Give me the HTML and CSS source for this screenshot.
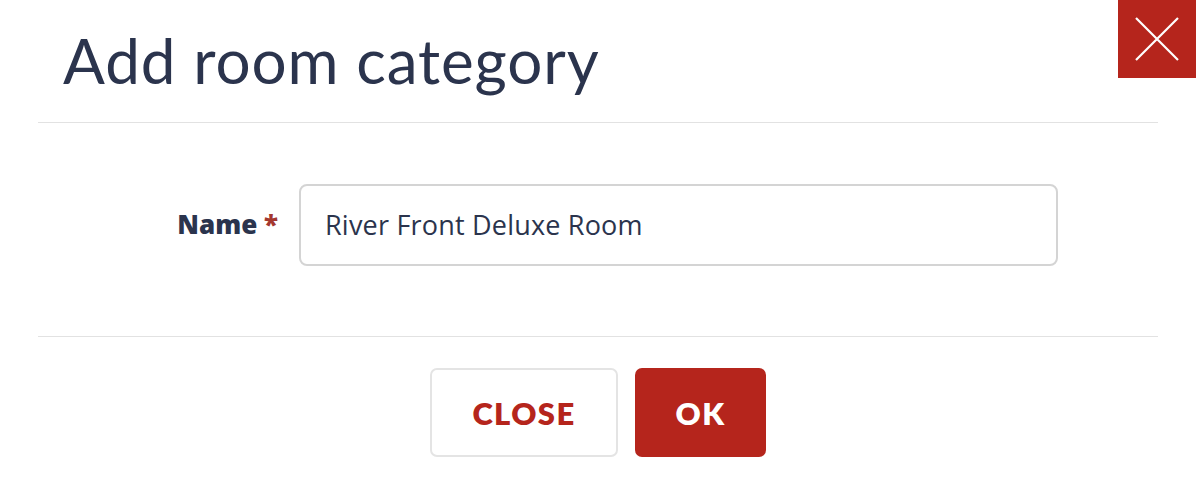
FILE: index.html
```html
<!DOCTYPE html>
<html>
<head>
<meta charset="utf-8">
<link rel="stylesheet" href="styles.css">
</head>
<body>
<div class="modal">
  <button class="close-x" aria-label="Close">
    <svg width="46" height="46" viewBox="0 0 46 46"><path d="M2 2L44 44M44 2L2 44" stroke="#fff" stroke-width="2.2" fill="none"/></svg>
  </button>
  <header class="modal-header">
    <h1 class="title">Add room category</h1>
  </header>
  <section class="modal-body">
    <label class="field-label" for="name">Name <span class="req">*</span></label>
    <input id="name" class="field-input" type="text" value="River Front Deluxe Room">
  </section>
  <footer class="modal-footer">
    <button class="btn btn-outline">CLOSE</button>
    <button class="btn btn-primary">OK</button>
  </footer>
</div>
</body>
</html>
```
FILE: styles.css
```css
* { box-sizing: border-box; }
html, body { margin: 0; padding: 0; background: #fff; }
body { font-family: "Lato", "Open Sans", sans-serif; color: #2b344d; }
.modal { position: relative; width: 1196px; height: 482px; padding: 0 38px; }
.close-x {
  position: absolute; top: 0; right: 0; width: 78px; height: 78px;
  background: #b5251c; border: none; padding: 0; display: flex;
  align-items: center; justify-content: center; cursor: pointer;
}
.modal-header { height: 123px; border-bottom: 1.5px solid #e2e2e2; padding-left: 25px; display: flex; align-items: flex-start; }
.title { margin: 0; padding-top: 24px; font-size: 62px; font-weight: 400; letter-spacing: 0.9px; line-height: 72px; color: #2b344d; }
.modal-body { height: 214px; border-bottom: 1.5px solid #e2e2e2; display: flex; align-items: flex-start; padding-top: 61px; }
.field-label { width: 261px; text-align: right; padding-right: 21px; font-family: "Open Sans", sans-serif; font-size: 26px; font-weight: 800; line-height: 80px; color: #2b344d; }
.req { color: #a4382f; }
.field-input {
  width: 759px; height: 82px; border: 2px solid #d4d4d4; border-radius: 8px;
  padding: 0 24px 2px; font-family: "Open Sans", sans-serif; font-size: 27px; letter-spacing: 0.2px; color: #2b344d; outline: none;
}
.modal-footer { display: flex; justify-content: center; gap: 17px; padding-top: 31px; }
.btn { height: 89px; border-radius: 7px; font-family: inherit; font-weight: 800; font-size: 31px; letter-spacing: 1.4px; cursor: pointer; }
.btn-outline { width: 188px; background: #fff; border: 2px solid #e4e4e4; color: #b5251c; }
.btn-primary { width: 131px; background: #b5251c; border: none; color: #fff; }
```
